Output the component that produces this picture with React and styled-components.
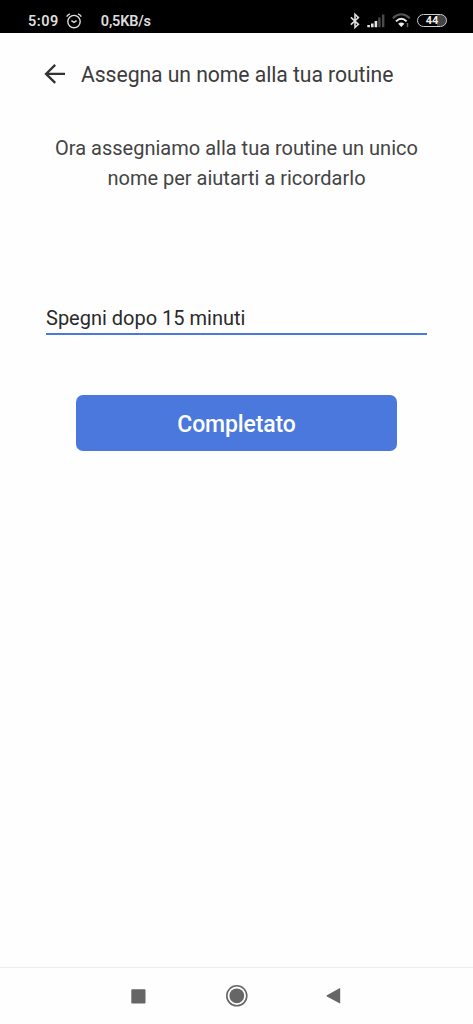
import React, { Component } from 'react';
import styled, { createGlobalStyle } from 'styled-components';

export default class App extends Component {
  state = { name: 'Spegni dopo 15 minuti' };

  handleChange = (e) => {
    this.setState({ name: e.target.value });
  };

  render() {
    return (
      <Screen>
        <GlobalStyle />
        <StatusBar>
          <StatusText $spacing="0.5px">5:09</StatusText>
          <AlarmIcon />
          <StatusText $spacing="-0.2px" className="speed">0,5KB/s</StatusText>
          <StatusIcons>
            <BluetoothIcon />
            <SignalIcon />
            <WifiIcon />
            <Battery>44</Battery>
          </StatusIcons>
        </StatusBar>
        <Header>
          <BackButton aria-label="Indietro">
            <svg width="22" height="20" viewBox="0 0 22 20" fill="none" stroke="#333" strokeWidth="2.3">
              <path d="M11.2 0.9 2 9.9l9.2 9M2 9.9H21" />
            </svg>
          </BackButton>
          <Title>Assegna un nome alla tua routine</Title>
        </Header>
        <Content>
          <Description>
            Ora assegniamo alla tua routine un unico
            <br />
            nome per aiutarti a ricordarlo
          </Description>
          <NameInput value={this.state.name} onChange={this.handleChange} />
          <DoneButton>Completato</DoneButton>
        </Content>
        <NavBar>
          <svg width="15" height="15" viewBox="0 0 15 15">
            <rect x="0.3" y="0.3" width="14.2" height="14.2" rx="0.8" fill="#666" />
          </svg>
          <svg width="22" height="22" viewBox="0 0 22 22">
            <circle cx="10.8" cy="10.8" r="10" fill="none" stroke="#666" strokeWidth="1.6" />
            <circle cx="10.8" cy="10.8" r="7.4" fill="#666" />
          </svg>
          <svg width="15" height="16" viewBox="0 0 15 16">
            <path d="M-0.1 7.2 12.5 0.2Q13.2 -0.1 13.2 0.7V14.9Q13.2 15.7 12.5 15.3L-0.1 8.4Q-0.9 7.8 -0.1 7.2Z" fill="#666" overflow="visible" />
          </svg>
        </NavBar>
      </Screen>
    );
  }
}

const AlarmIcon = () => (
  <svg width="16" height="16" viewBox="0 0 16 16" fill="none" stroke="#ddd" strokeWidth="1.4">
    <circle cx="8" cy="8.6" r="6.2" />
    <path d="M0.7 3.6Q1.8 1.6 4 0.9M15.3 3.6Q14.2 1.6 12 0.9M5.4 7.6 8 9.4l2.6-1.8" />
  </svg>
);

const BluetoothIcon = () => (
  <svg width="10" height="16" viewBox="0 0 10 16" fill="none" stroke="#ddd" strokeWidth="1.6">
    <path d="M0.9 4.3 8.4 11.3 5 14.5V1.3L8.4 4.6 0.9 11.6" />
  </svg>
);

const SignalIcon = () => (
  <svg width="18" height="14" viewBox="0 0 18 14">
    <path d="M0.3 11h2.6v2.3H0.3zM4 9.5h2.6v3.8H4zM7.6 7h2.6v6.3H7.6z" fill="#e6e6e6" />
    <path d="M11.2 3.5h2.4v9.8h-2.4zM15 0.5h2.4v12.8H15z" fill="#4a4a4a" />
  </svg>
);

const WifiIcon = () => (
  <svg width="19" height="15" viewBox="0 0 19 15" fill="none" strokeWidth="2">
    <path d="M0.8 5.2Q9.3-2.6 17.8 5.2" stroke="#555" />
    <path d="M4 8.4Q9.3 3.2 14.6 8.4" stroke="#eee" />
    <path d="M6.2 10.8Q9.3 8.2 12.4 10.8L9.3 14z" fill="#eee" />
    <path d="M15.5 10v4" stroke="#666" strokeWidth="1.5" />
  </svg>
);

const GlobalStyle = createGlobalStyle`
  * {
    box-sizing: border-box;
  }
  body {
    margin: 0;
    background: #fff;
    font-family: Roboto, sans-serif;
  }
  svg {
    display: block;
    flex-shrink: 0;
    overflow: visible;
  }
`;

const Screen = styled.div`
  display: flex;
  flex-direction: column;
  height: 1024px;
  background: #fefefe;
`;

const StatusBar = styled.div`
  display: flex;
  align-items: center;
  height: 33px;
  padding: 8px 26px 0 28px;
  background: #000;
  .speed {
    margin-left: 19px;
  }
`;

const StatusText = styled.span`
  margin-right: 7px;
  padding-top: 2px;
  color: #ddd;
  font-size: 14.5px;
  font-weight: 600;
  letter-spacing: ${(props) => props.$spacing};
  line-height: 17px;
`;

const StatusIcons = styled.div`
  display: flex;
  align-items: center;
  gap: 7px;
  margin-left: auto;
`;

const Battery = styled.span`
  width: 30px;
  height: 13px;
  margin-left: -1px;
  border: 1.5px solid #ccc;
  border-radius: 7px;
  background: linear-gradient(90deg, #000 68%, #444 68%);
  color: #eee;
  font-size: 11px;
  font-weight: 700;
  line-height: 11px;
  text-align: center;
`;

const Header = styled.header`
  display: flex;
  align-items: center;
  height: 82px;
  padding-left: 44px;
`;

const BackButton = styled.button`
  padding: 0;
  border: 0;
  background: none;
`;

const Title = styled.h1`
  margin: 0 0 0 15px;
  padding-top: 2px;
  color: #3c3c3c;
  font-size: 21.2px;
  font-weight: 400;
  letter-spacing: -0.07px;
  line-height: 28px;
`;

const Content = styled.main`
  display: flex;
  flex: 1;
  flex-direction: column;
  align-items: center;
  padding: 18px 46px 0;
`;

const Description = styled.p`
  margin: 0;
  color: #444;
  font-size: 20px;
  line-height: 30px;
  text-align: center;
  white-space: nowrap;
`;

const NameInput = styled.input`
  width: 381px;
  height: 36px;
  margin-top: 106px;
  padding: 3px 0 0;
  border: 0;
  border-bottom: 2px solid #4a78dc;
  outline: none;
  background: none;
  color: #2a2a2a;
  font-family: inherit;
  font-size: 20px;
`;

const DoneButton = styled.button`
  width: 321px;
  height: 56px;
  margin-top: 60px;
  padding: 2px 0 0;
  border: 0;
  border-radius: 7px;
  background: #4a78dc;
  color: #fff;
  font-family: inherit;
  font-size: 23px;
  font-weight: 500;
  letter-spacing: -0.12px;
`;

const NavBar = styled.nav`
  display: flex;
  align-items: center;
  justify-content: space-between;
  height: 57px;
  padding: 0 131px 0 131px;
  border-top: 1px solid #eee;
`;
